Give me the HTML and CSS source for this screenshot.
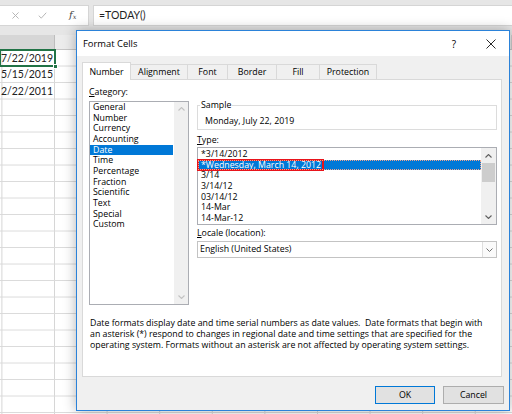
FILE: index.html
```html
<!DOCTYPE html>
<html lang="en">
<head>
<meta charset="utf-8">
<title>Format Cells</title>
<link rel="stylesheet" href="styles.css">
</head>
<body>
<div class="excel">
  <div class="formula-bar">
    <div class="fx-buttons">
      <svg class="ico ico-cancel" viewBox="0 0 8 8" width="8" height="8"><path d="M0.5 0.5L7.5 7.5M7.5 0.5L0.5 7.5"/></svg>
      <svg class="ico ico-enter" viewBox="0 0 10 8" width="10" height="8"><path d="M0.7 4.2L3.6 7L9.3 0.8"/></svg>
      <span class="fx"><i>f</i><sub>x</sub></span>
    </div>
    <div class="formula-input">=TODAY()</div>
  </div>
  <div class="col-headers">
    <div class="colh colh-sel"></div>
    <div class="colh colh-rest"></div>
  </div>
  <div class="sheet">
    <div class="cell cell-active">7/22/2019<span class="fill-handle"></span></div>
    <div class="cell">5/15/2015</div>
    <div class="cell">2/22/2011</div>
  </div>
</div>

<div class="dialog">
  <div class="titlebar">
    <span class="title">Format Cells</span>
    <span class="help">?</span>
    <svg class="close" viewBox="0 0 10 10" width="10" height="10"><path d="M0.5 0.5L9.5 9.5M9.5 0.5L0.5 9.5"/></svg>
  </div>
  <div class="dlg-body">
    <div class="tabs">
      <div class="tab tab-active t-number">Number</div>
      <div class="tab t-align">Alignment</div>
      <div class="tab t-font">Font</div>
      <div class="tab t-border">Border</div>
      <div class="tab t-fill">Fill</div>
      <div class="tab t-prot">Protection</div>
    </div>
    <div class="panel">
      <div class="panel-grid">
        <div class="category">
          <div class="label"><u>C</u>ategory:</div>
          <div class="listbox cat-list">
            <ul class="items">
              <li>General</li>
              <li>Number</li>
              <li>Currency</li>
              <li>Accounting</li>
              <li class="sel">Date</li>
              <li>Time</li>
              <li>Percentage</li>
              <li>Fraction</li>
              <li>Scientific</li>
              <li>Text</li>
              <li>Special</li>
              <li>Custom</li>
            </ul>
            <div class="scrollbar sb-disabled">
              <span class="sb-btn"><svg viewBox="0 0 7 4" width="7" height="4"><path d="M0.5 3.5L3.5 0.5L6.5 3.5"/></svg></span>
              <span class="sb-btn"><svg viewBox="0 0 7 4" width="7" height="4"><path d="M0.5 0.5L3.5 3.5L6.5 0.5"/></svg></span>
            </div>
          </div>
        </div>
        <div class="options">
          <fieldset class="sample">
            <legend>Sample</legend>
            <div class="sample-value">Monday, July 22, 2019</div>
          </fieldset>
          <div class="label type-label"><u>T</u>ype:</div>
          <div class="listbox type-list">
            <ul class="items">
              <li>*3/14/2012</li>
              <li class="sel focus"><span class="callout">*Wednesday, March 14, 2012</span></li>
              <li>3/14</li>
              <li>3/14/12</li>
              <li>03/14/12</li>
              <li>14-Mar</li>
              <li>14-Mar-12</li>
            </ul>
            <div class="scrollbar">
              <span class="sb-btn"><svg viewBox="0 0 7 4" width="7" height="4"><path d="M0.5 3.5L3.5 0.5L6.5 3.5"/></svg></span>
              <span class="thumb"></span>
              <span class="sb-fill"></span>
              <span class="sb-btn"><svg viewBox="0 0 7 4" width="7" height="4"><path d="M0.5 0.5L3.5 3.5L6.5 0.5"/></svg></span>
            </div>
          </div>
          <div class="label locale-label"><u>L</u>ocale (location):</div>
          <div class="combo">
            <span class="combo-value">English (United States)</span>
            <span class="combo-btn"><svg viewBox="0 0 7 4" width="7" height="4"><path d="M0.5 0.5L3.5 3.5L6.5 0.5"/></svg></span>
          </div>
        </div>
      </div>
      <p class="desc">Date formats display date and time serial numbers as date values.&nbsp; Date formats that begin with<br>an asterisk (*) respond to changes in regional date and time settings that are specified for the<br>operating system. Formats without an asterisk are not affected by operating system settings.</p>
    </div>
    <div class="buttons">
      <button class="btn btn-default">OK</button>
      <button class="btn">Cancel</button>
    </div>
  </div>
</div>
</body>
</html>
```

FILE: styles.css
```css
* { box-sizing: border-box; }

body {
  margin: 0;
  width: 512px;
  height: 414px;
  overflow: hidden;
  position: relative;
  background: #fff;
  font-family: "Open Sans", "Noto Sans", sans-serif;
  font-size: 8.8px;
  color: #000;
}

/* ---------- spreadsheet behind ---------- */
.excel {
  display: flex;
  flex-direction: column;
  height: 414px;
  background: #e6e6e6;
}

.formula-bar {
  display: flex;
  height: 21px;
  margin: 5px 0 9px;
}

.fx-buttons {
  width: 89px;
  background: #fff;
  border: 1px solid #d5d5d5;
  border-left: none;
  display: flex;
  align-items: center;
}

.ico { fill: none; stroke: #b4b4b4; stroke-width: 1.1; }
.ico-cancel { margin-left: 12px; width: 7px; height: 7px; }
.ico-enter { margin-left: 19px; width: 9px; height: 7px; }

.fx {
  margin-left: 22px;
  font-family: "DejaVu Serif", "Liberation Serif", serif;
  font-size: 10px;
  line-height: 12px;
  color: #444;
}
.fx i { font-style: italic; }
.fx sub { font-size: 6.5px; vertical-align: -1px; font-style: italic; }

.formula-input {
  flex: 1;
  margin-left: 4px;
  background: #fff;
  border: 1px solid #d5d5d5;
  border-right: none;
  padding-left: 5px;
  font-family: Lato, "Liberation Sans", sans-serif;
  font-size: 10.5px;
  line-height: 19px;
  color: #1f1f1f;
}

.col-headers {
  display: flex;
  height: 14.5px;
  border-bottom: 1px solid #c6c6c6;
}
.colh { background: #ececec; border-right: 1px solid #cfcfcf; }
.colh-sel { width: 55px; background: #d6d6d6; border-right-color: #bdbdbd; }
.colh-rest { flex: 1; }

.sheet {
  flex: 1;
  background-color: #fff;
  background-image:
    linear-gradient(to bottom, transparent 15.5px, #dadada 15.5px),
    linear-gradient(to right, transparent 51.6px, #d6d6d6 51.6px);
  background-size: 100% 16.5px, 52.6px 100%;
  background-position: 0 0, 2.4px 0;
}

.cell {
  width: 55px;
  height: 16.5px;
  padding-right: 2px;
  text-align: right;
  font-family: Lato, "Liberation Sans", sans-serif;
  font-size: 10.5px;
  line-height: 17px;
  color: #222;
}

.cell-active {
  position: relative;
  outline: 2px solid #217346;
  outline-offset: -1.5px;
}

.fill-handle {
  position: absolute;
  right: -3px;
  bottom: -3px;
  width: 5px;
  height: 5px;
  background: #217346;
  border: 1px solid #fff;
}

/* ---------- dialog ---------- */
.dialog {
  position: absolute;
  left: 76px;
  top: 30px;
  width: 434px;
  height: 381px;
  border: 1px solid #2b82d9;
  background: #f0f0f0;
  box-shadow: 0 0 12px rgba(0, 0, 0, 0.3);
  display: flex;
  flex-direction: column;
}

.titlebar {
  height: 25px;
  background: #fff;
  display: flex;
  align-items: center;
  padding-left: 6px;
  flex: none;
}
.title { flex: 1; font-size: 9.4px; }
.help { width: 14px; text-align: center; font-size: 10px; margin-right: 25px; }
.close { fill: none; stroke: #111; stroke-width: 0.9; margin-right: 13px; }

.dlg-body {
  flex: 1;
  display: flex;
  flex-direction: column;
  padding: 6px 5px 6px 5px;
}

.tabs {
  display: flex;
  align-items: flex-end;
  height: 17px;
  flex: none;
}

.tab {
  height: 15px;
  line-height: 14px;
  text-align: center;
  background: #f0f0f0;
  border: 1px solid #d9d9d9;
  border-bottom: none;
  border-left: none;
}
.tab-active {
  height: 18px;
  line-height: 19px;
  margin-bottom: -1px;
  background: #fff;
  border-left: 1px solid #d9d9d9;
  position: relative;
  z-index: 1;
}
.t-number { width: 49px; }
.t-align { width: 57px; }
.t-font { width: 40px; }
.t-border { width: 49px; }
.t-fill { width: 43px; }
.t-prot { width: 57px; }

.panel {
  height: 298px;
  flex: none;
  margin-right: 2px;
  background: #fff;
  border: 1px solid #d9d9d9;
  padding: 7px 4px 0 6px;
}

.panel-grid {
  display: grid;
  grid-template-columns: 100px 1fr;
  column-gap: 8px;
  align-items: start;
}

.label { line-height: 11px; height: 11px; white-space: nowrap; }
.label u { text-decoration-thickness: 1px; text-underline-offset: 1px; }

.listbox {
  display: flex;
  border: 1px solid #abadb3;
  background: #fff;
}

.items {
  list-style: none;
  margin: 0;
  padding: 0;
  flex: 1;
  min-width: 0;
}
.items li {
  line-height: 10.67px;
  height: 10.67px;
  padding-left: 3px;
  white-space: nowrap;
}
.items li.sel { background: #0078d7; color: #fff; }

.cat-list { height: 204px; margin-top: 3px; }
.cat-list .items { padding-right: 1px; }

.scrollbar {
  width: 14px;
  background: #f0f0f0;
  display: flex;
  flex-direction: column;
  justify-content: space-between;
}
.sb-btn {
  height: 14px;
  display: flex;
  align-items: center;
  justify-content: center;
}
.sb-btn svg { fill: none; stroke: #606060; stroke-width: 1.1; }
.sb-disabled .sb-btn svg { stroke: #c2c2c2; }

.options { padding-top: 13px; }

.sample {
  margin: 0;
  min-width: 0;
  border: 1px solid #dcdcdc;
  padding: 5px 7px 2px;
}
.sample legend {
  padding: 0 1px;
  margin-left: -5px;
  line-height: 11px;
}
.sample-value { line-height: 11px; }

.type-label { margin-top: 5px; }

.type-list { height: 78px; margin-top: 1px; }
.type-list .items { padding-top: 1px; }
.type-list .scrollbar { width: 15px; justify-content: flex-start; }
.type-list .sb-btn { height: 15px; }
.thumb {
  height: 19px;
  margin: 0 1px;
  background: #cdcdcd;
}
.sb-fill { flex: 1; }

.items li.focus {
  outline: 1px dotted #f3a58c;
  outline-offset: -1px;
}
.items li.sel .callout {
  display: inline-block;
  height: 10.67px;
  margin-left: -3px;
  padding: 0 2px 0 3px;
  outline: 2px solid #e8141b;
  outline-offset: -1px;
}

.locale-label { margin-top: 3px; }

.combo {
  display: flex;
  height: 17px;
  margin-top: 2px;
  border: 1px solid #c3c3c3;
  background: #fff;
}
.combo-value { flex: 1; padding-left: 2px; line-height: 15px; }
.combo-btn {
  width: 14px;
  border-left: 1px solid #dedede;
  background: #fafafa;
  display: flex;
  align-items: center;
  justify-content: center;
}
.combo-btn svg { fill: none; stroke: #707070; stroke-width: 1; }

.desc {
  margin: 13px 0 0 1px;
  line-height: 10.8px;
  white-space: nowrap;
}

.buttons {
  display: flex;
  justify-content: flex-end;
  gap: 8px;
  margin-top: 9px;
}

.btn {
  width: 61px;
  height: 18px;
  padding: 0;
  font: inherit;
  color: #000;
  background: #e1e1e1;
  border: 1px solid #adadad;
}
.btn-default { width: 60px; border-color: #0078d7; }
```
